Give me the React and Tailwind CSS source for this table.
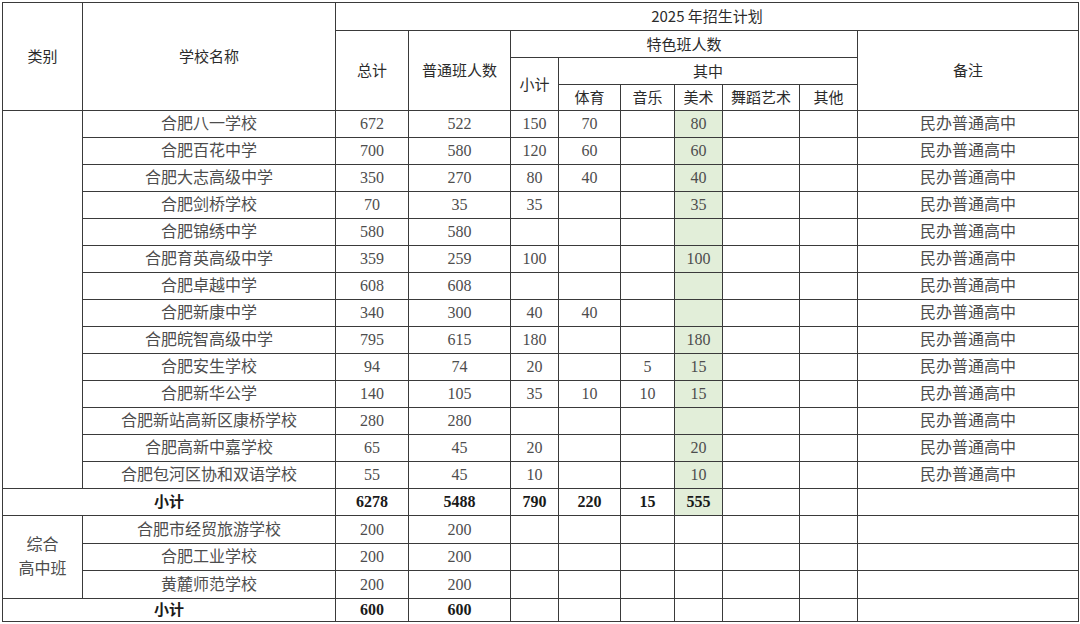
import React from "react";

const schools = [
  ["合肥八一学校", "672", "522", "150", "70", "", "80"],
  ["合肥百花中学", "700", "580", "120", "60", "", "60"],
  ["合肥大志高级中学", "350", "270", "80", "40", "", "40"],
  ["合肥剑桥学校", "70", "35", "35", "", "", "35"],
  ["合肥锦绣中学", "580", "580", "", "", "", ""],
  ["合肥育英高级中学", "359", "259", "100", "", "", "100"],
  ["合肥卓越中学", "608", "608", "", "", "", ""],
  ["合肥新康中学", "340", "300", "40", "40", "", ""],
  ["合肥皖智高级中学", "795", "615", "180", "", "", "180"],
  ["合肥安生学校", "94", "74", "20", "", "5", "15"],
  ["合肥新华公学", "140", "105", "35", "10", "10", "15"],
  ["合肥新站高新区康桥学校", "280", "280", "", "", "", ""],
  ["合肥高新中嘉学校", "65", "45", "20", "", "", "20"],
  ["合肥包河区协和双语学校", "55", "45", "10", "", "", "10"],
];

const vocational = [
  ["合肥市经贸旅游学校", "200", "200", "h-[28px]"],
  ["合肥工业学校", "200", "200", "h-[27px]"],
  ["黄麓师范学校", "200", "200", "h-[28px]"],
];

const serif = { fontFamily: '"Liberation Serif", "Noto Sans CJK SC", serif' };

const td = "border border-[#3a3a3a] text-center align-middle p-0";
const th = "border border-[#3a3a3a] text-center align-middle p-0 font-normal text-[15px] text-[#2b2b2b]";
const green = "bg-[#e2eed9]";

export default function App() {
  return (
    <div className="w-[1080px] h-[624px] bg-white pt-[2px] pl-[2px] overflow-hidden">
      <table
        className="border-collapse table-fixed w-[1076px] border border-[#8a8a8a]"
        style={{ fontFamily: '"Noto Sans CJK SC", "Noto Sans", sans-serif' }}
      >
        <colgroup>
          <col className="w-[80px]" />
          <col className="w-[253px]" />
          <col className="w-[73px]" />
          <col className="w-[102px]" />
          <col className="w-[48px]" />
          <col className="w-[62px]" />
          <col className="w-[54px]" />
          <col className="w-[48px]" />
          <col className="w-[77px]" />
          <col className="w-[58px]" />
          <col className="w-[221px]" />
        </colgroup>
        <thead>
          <tr className="h-[28px]">
            <th rowSpan={4} className={th}>类别</th>
            <th rowSpan={4} className={th}>学校名称</th>
            <th colSpan={9} className={th}>2025 年招生计划</th>
          </tr>
          <tr className="h-[27px]">
            <th rowSpan={3} className={th}>总计</th>
            <th rowSpan={3} className={th}>普通班人数</th>
            <th colSpan={6} className={th}>特色班人数</th>
            <th rowSpan={3} className={th}>备注</th>
          </tr>
          <tr className="h-[27px]">
            <th rowSpan={2} className={th}>小计</th>
            <th colSpan={5} className={th}>其中</th>
          </tr>
          <tr className="h-[26px]">
            <th className={th}>体育</th>
            <th className={th}>音乐</th>
            <th className={th}>美术</th>
            <th className={th}>舞蹈艺术</th>
            <th className={th}>其他</th>
          </tr>
        </thead>
        <tbody className="text-[#4d4d4d] text-[16px] leading-[20px]" style={serif}>
          {schools.map((row, i) => (
            <tr key={row[0]} className="h-[27px]">
              {i === 0 && <td rowSpan={14} className={td}></td>}
              <td className={td}>{row[0]}</td>
              <td className={td}>{row[1]}</td>
              <td className={td}>{row[2]}</td>
              <td className={td}>{row[3]}</td>
              <td className={td}>{row[4]}</td>
              <td className={td}>{row[5]}</td>
              <td className={`${td} ${green}`}>{row[6]}</td>
              <td className={td}></td>
              <td className={td}></td>
              <td className={td}>民办普通高中</td>
            </tr>
          ))}
          <tr className="h-[27px] font-bold text-[#1a1a1a]">
            <td colSpan={2} className={`${td} text-[15px]`}>小计</td>
            <td className={td}>6278</td>
            <td className={td}>5488</td>
            <td className={td}>790</td>
            <td className={td}>220</td>
            <td className={td}>15</td>
            <td className={`${td} ${green}`}>555</td>
            <td className={td}></td>
            <td className={td}></td>
            <td className={td}></td>
          </tr>
          {vocational.map((row, i) => (
            <tr key={row[0]} className={row[3]}>
              {i === 0 && (
                <td rowSpan={3} className={`${td} leading-[24px]`}>
                  综合
                  <br />
                  高中班
                </td>
              )}
              <td className={td}>{row[0]}</td>
              <td className={td}>{row[1]}</td>
              <td className={td}>{row[2]}</td>
              <td className={td}></td>
              <td className={td}></td>
              <td className={td}></td>
              <td className={td}></td>
              <td className={td}></td>
              <td className={td}></td>
              <td className={td}></td>
            </tr>
          ))}
          <tr className="h-[23px] font-bold text-[#1a1a1a]">
            <td colSpan={2} className={`${td} text-[15px]`}>小计</td>
            <td className={td}>600</td>
            <td className={td}>600</td>
            <td className={td}></td>
            <td className={td}></td>
            <td className={td}></td>
            <td className={td}></td>
            <td className={td}></td>
            <td className={td}></td>
            <td className={td}></td>
          </tr>
        </tbody>
      </table>
    </div>
  );
}
